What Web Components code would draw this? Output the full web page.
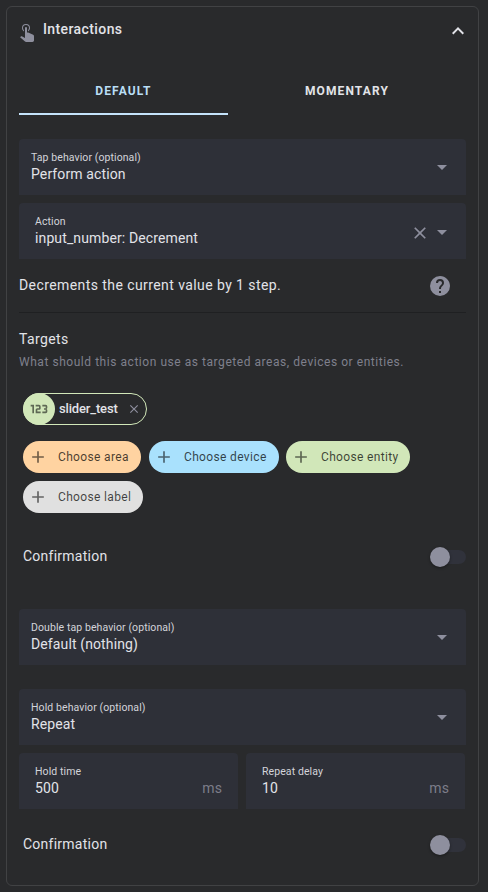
<!DOCTYPE html>
<html lang="en">
<head>
<meta charset="utf-8">
<title>Interactions</title>
<style>
html, body { margin: 0; background: #292a2c; }
body { box-sizing: border-box; height: 892px; padding: 6px 9px 6px 6px; font-family: Roboto, "Liberation Sans", sans-serif; font-size: 14px; color: #e2e3e8; overflow: hidden; }
.row { display: flex; gap: 8px; width: 446px; }
</style>
</head>
<body>
<interaction-panel>
  <tab-strip></tab-strip>
  <select-field style="margin-top:24px" label="Tap behavior (optional)" value="Perform action"></select-field>
  <select-field style="margin-top:8px" inset clearable label="Action" value="input_number: Decrement"></select-field>
  <service-description></service-description>
  <target-picker></target-picker>
  <toggle-row style="margin-top:34px">Confirmation</toggle-row>
  <select-field style="margin-top:42px" label="Double tap behavior (optional)" value="Default (nothing)"></select-field>
  <select-field style="margin-top:24px" label="Hold behavior (optional)" value="Repeat"></select-field>
  <div class="row" style="margin-top:8px">
    <select-field style="flex:1" inset unit="ms" label="Hold time" value="500"></select-field>
    <select-field style="flex:1" inset unit="ms" label="Repeat delay" value="10"></select-field>
  </div>
  <toggle-row style="margin-top:26px">Confirmation</toggle-row>
</interaction-panel>
<script>
const ICONS = {
  tap: 'M10,9A1,1 0 0,1 11,8A1,1 0 0,1 12,9V13.47L13.21,13.6L18.15,15.79C18.68,16.03 19,16.56 19,17.14V21.5C18.97,22.32 18.32,22.97 17.5,23H11C10.62,23 10.26,22.85 10,22.57L5.1,18.37L5.84,17.6C6.03,17.39 6.3,17.28 6.58,17.28H6.8L10,19V9M11,5A4,4 0 0,1 15,9C15,10.5 14.2,11.77 13,12.46V11.24C13.61,10.69 14,9.89 14,9A3,3 0 0,0 11,6A3,3 0 0,0 8,9C8,9.89 8.39,10.69 9,11.24V12.46C7.8,11.77 7,10.5 7,9A4,4 0 0,1 11,5Z',
  up: 'M7.41,15.41L12,10.83L16.59,15.41L18,14L12,8L6,14L7.41,15.41Z',
  down: 'M7,10L12,15L17,10H7Z',
  close: 'M19,6.41L17.59,5L12,10.59L6.41,5L5,6.41L10.59,12L5,17.59L6.41,19L12,13.41L17.59,19L19,17.59L13.41,12L19,6.41Z',
  plus: 'M19,13H13V19H11V13H5V11H11V5H13V11H19V13Z',
  help: 'M15.07,11.25L14.17,12.17C13.45,12.89 13,13.5 13,15H11V14.5C11,13.39 11.45,12.39 12.17,11.67L13.41,10.41C13.78,10.05 14,9.55 14,9C14,7.89 13.1,7 12,7A2,2 0 0,0 10,9H8A4,4 0 0,1 12,5A4,4 0 0,1 16,9C16,9.88 15.64,10.67 15.07,11.25M13,19H11V17H13M12,2A10,10 0 0,0 2,12A10,10 0 0,0 12,22A10,10 0 0,0 22,12C22,6.47 17.5,2 12,2Z',
  numeric: 'M4,17V9H2V7H6V17H4M22,15C22,16.11 21.1,17 20,17H16V15H20V13H18V11H20V9H16V7H20A2,2 0 0,1 22,9V10.5A1.5,1.5 0 0,1 20.5,12A1.5,1.5 0 0,1 22,13.5V15M14,15V17H8V13C8,11.89 8.9,11 10,11H12V9H8V7H12A2,2 0 0,1 14,9V11C14,12.11 13.1,13 12,13H10V15H14Z'
};
function define(name, render) {
  customElements.define(name, class extends HTMLElement {
    constructor() { super(); this.attachShadow({ mode: 'open' }); }
    connectedCallback() { this.shadowRoot.innerHTML = render(this); }
  });
}

define('ui-icon', el => `
<style>:host{display:block;flex:none;width:${el.getAttribute('size') || 24}px;height:${el.getAttribute('size') || 24}px}svg{display:block;width:100%;height:100%;fill:currentColor}</style>
<svg viewBox="0 0 24 24"><path d="${ICONS[el.getAttribute('name')]}"/></svg>`);

define('interaction-panel', () => `
<style>
:host{display:block;box-sizing:border-box;height:880px;border:1px solid #414244;border-radius:6px;padding:0 12px}
header{display:flex;align-items:flex-start;height:60px;padding-top:12px;box-sizing:border-box;margin:0 -4px}
header ui-icon:first-child{color:#8e8f9e}
h1{flex:1;margin:0 0 0 4px;font-size:14px;line-height:20px;font-weight:500;letter-spacing:.4px}
</style>
<header><ui-icon name="tap"></ui-icon><h1>Interactions</h1><ui-icon name="up"></ui-icon></header>
<slot></slot>`);

define('tab-strip', () => `
<style>
:host{display:flex;height:48px;font-size:12px;font-weight:700;letter-spacing:1.12px}
div{box-sizing:border-box;flex:1;display:flex;align-items:center;justify-content:center;padding-bottom:1px}
.on{flex:0 0 209px;border-bottom:2px solid #c4e3fb;color:#b9def5;padding:1px 0 0}
</style>
<div class="on">DEFAULT</div><div>MOMENTARY</div>`);

define('select-field', el => {
  const a = n => el.getAttribute(n);
  const inset = el.hasAttribute('inset');
  return `
<style>
:host{display:flex;box-sizing:border-box;height:56px;background:#2e3038;border-radius:4px 4px 0 0;padding:0 12px 0 ${inset ? 16 : 12}px}
.text{flex:1;padding-top:11px;white-space:nowrap}
.label{font-size:10.5px;line-height:14px;height:14px;padding-top:1px;margin-bottom:-1px;color:#d3d4da;letter-spacing:.09px}
.value{font-size:14px;line-height:20px;letter-spacing:.12px}
ui-icon{color:#8e8f9e;margin-top:${inset ? 17 : 16}px}
.clear{margin:20px 0 0 0}
.unit{align-self:flex-start;margin:25px 4px 0 0;line-height:20px;color:#7c7d88;letter-spacing:.12px}
</style>
<div class="text"><div class="label">${a('label')}</div><div class="value">${a('value')}</div></div>
${el.hasAttribute('clearable') ? '<ui-icon class="clear" name="close" size="20"></ui-icon>' : ''}
${a('unit') ? `<span class="unit">${a('unit')}</span>` : '<ui-icon name="down"></ui-icon>'}`;
});

define('service-description', () => `
<style>
:host{display:flex;box-sizing:border-box;align-items:center;justify-content:space-between;height:54px;border-bottom:1px solid #1f2022;padding-right:14px}
p{margin:0 0 1px;letter-spacing:.42px}
ui-icon{color:#8e8f9e}
</style>
<p>Decrements the current value by 1 step.</p><ui-icon name="help"></ui-icon>`);

define('target-picker', () => `
<style>
:host{display:block;padding-top:16px}
h2{margin:0;font-size:14px;line-height:20px;font-weight:400;letter-spacing:.4px}
p{margin:4px 0 0;font-size:12px;line-height:18px;color:#7f808c;letter-spacing:.545px}
.chips{display:flex;flex-wrap:wrap;gap:8px;padding:22px 4px 0}
.chips + .chips{padding-top:16px}
</style>
<h2>Targets</h2>
<p>What should this action use as targeted areas, devices or entities.</p>
<div class="chips"><target-chip>slider_test</target-chip></div>
<div class="chips">
<choose-chip style="width:118px;background:#ffd3a1">Choose area</choose-chip>
<choose-chip style="width:129.5px;margin-right:-.5px;background:#a9e1fd">Choose device</choose-chip>
<choose-chip style="width:124px;background:#d1e7b9">Choose entity</choose-chip>
<choose-chip style="width:120px;background:#e0e0e0">Choose label</choose-chip>
</div>`);

define('target-chip', () => `
<style>
:host{display:flex;box-sizing:border-box;align-items:center;width:124px;height:32px;border:1px solid #d1e7b9;border-radius:16px;font-size:13px;font-weight:500;letter-spacing:-.16px}
.dot{display:flex;align-items:center;justify-content:center;width:32px;height:32px;margin-left:-1px;border-radius:50%;background:#d1e7b9;color:#5e6854}
span{flex:1;margin:-1px 0 0 4px}
.x{color:#8e8f9e;margin-right:5px}
</style>
<div class="dot"><ui-icon name="numeric" size="20"></ui-icon></div><span><slot></slot></span><ui-icon class="x" name="close" size="14"></ui-icon>`);

define('choose-chip', () => `
<style>
:host{display:flex;box-sizing:border-box;align-items:center;height:32px;border-radius:16px;padding-left:5px;font-size:12px;color:rgba(0,0,0,.72);letter-spacing:.35px;white-space:nowrap}
ui-icon{color:rgba(0,0,0,.56);margin-right:10px}
</style>
<ui-icon name="plus" size="20"></ui-icon><slot></slot>`);

define('toggle-row', () => `
<style>
:host{display:flex;align-items:center;justify-content:space-between;height:20px;padding-left:4px;letter-spacing:.25px}
span{margin-top:-2px}
.track{width:32px;height:14px;border-radius:7px;background:#30323b;display:flex;align-items:center}
.thumb{flex:none;width:20px;height:20px;margin-left:-4px;border-radius:50%;background:#8e8f9e;box-shadow:0 1px 3px rgba(0,0,0,.4)}
</style>
<span><slot></slot></span><div class="track"><div class="thumb"></div></div>`);
</script>
</body>
</html>
